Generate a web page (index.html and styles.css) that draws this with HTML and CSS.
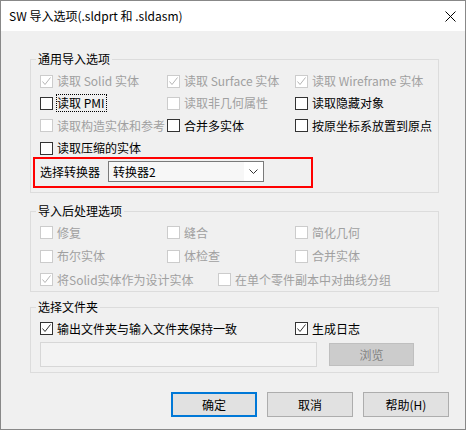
FILE: index.html
```html
<!DOCTYPE html>
<html lang="zh-CN">
<head>
    <meta charset="UTF-8">
    <title>SW 导入选项</title>
    <link rel="stylesheet" href="styles.css">
</head>
<body>
    <div class="dialog">
        <div class="titlebar">
            <span class="title">SW 导入选项(.sldprt 和 .sldasm)</span>
            <svg class="close" width="11" height="11" viewBox="0 0 11 11"><path d="M0.5 0.5L10.5 10.5M10.5 0.5L0.5 10.5"/></svg>
        </div>

        <div class="content">
            <fieldset class="group group-general">
                <legend>通用导入选项</legend>
                <div class="grid grid-general">
                    <div class="check disabled"><span class="box"><svg viewBox="0 0 11 11"><path d="M1.5 5.5L4 8.5L9.5 1.5"/></svg></span><span>读取 Solid 实体</span></div>
                    <div class="check disabled"><span class="box"><svg viewBox="0 0 11 11"><path d="M1.5 5.5L4 8.5L9.5 1.5"/></svg></span><span>读取 Surface 实体</span></div>
                    <div class="check disabled"><span class="box"><svg viewBox="0 0 11 11"><path d="M1.5 5.5L4 8.5L9.5 1.5"/></svg></span><span>读取 Wireframe 实体</span></div>

                    <div class="check"><span class="box"></span><span class="focus">读取 PMI</span></div>
                    <div class="check disabled"><span class="box"></span><span>读取非几何属性</span></div>
                    <div class="check"><span class="box"></span><span>读取隐藏对象</span></div>

                    <div class="check disabled"><span class="box"></span><span>读取构造实体和参考</span></div>
                    <div class="check"><span class="box"></span><span>合并多实体</span></div>
                    <div class="check"><span class="box"></span><span>按原坐标系放置到原点</span></div>

                    <div class="check"><span class="box"></span><span>读取压缩的实体</span></div>
                </div>
                <div class="converter">
                    <span class="converter-label">选择转换器</span>
                    <div class="combo">
                        <span class="combo-value">转换器2</span>
                        <span class="combo-arrow"><svg width="9" height="5" viewBox="0 0 9 5"><path d="M0.5 0.5L4.5 4.5L8.5 0.5"/></svg></span>
                    </div>
                </div>
            </fieldset>

            <fieldset class="group group-post">
                <legend>导入后处理选项</legend>
                <div class="grid grid-post">
                    <div class="check disabled"><span class="box"></span><span>修复</span></div>
                    <div class="check disabled"><span class="box"></span><span>缝合</span></div>
                    <div class="check disabled"><span class="box"></span><span>简化几何</span></div>

                    <div class="check disabled"><span class="box"></span><span>布尔实体</span></div>
                    <div class="check disabled"><span class="box"></span><span>体检查</span></div>
                    <div class="check disabled"><span class="box"></span><span>合并实体</span></div>
                </div>
                <div class="row-post">
                    <div class="check disabled"><span class="box"><svg viewBox="0 0 11 11"><path d="M1.5 5.5L4 8.5L9.5 1.5"/></svg></span><span>将Solid实体作为设计实体</span></div>
                    <div class="check disabled"><span class="box"></span><span>在单个零件副本中对曲线分组</span></div>
                </div>
            </fieldset>

            <fieldset class="group group-folder">
                <legend>选择文件夹</legend>
                <div class="row-folder">
                    <div class="check"><span class="box"><svg viewBox="0 0 11 11"><path d="M1.5 5.5L4 8.5L9.5 1.5"/></svg></span><span>输出文件夹与输入文件夹保持一致</span></div>
                    <div class="check"><span class="box"><svg viewBox="0 0 11 11"><path d="M1.5 5.5L4 8.5L9.5 1.5"/></svg></span><span>生成日志</span></div>
                </div>
                <div class="path-row">
                    <div class="path-input"></div>
                    <button class="btn btn-browse" disabled>浏览</button>
                </div>
            </fieldset>

            <div class="actions">
                <button class="btn btn-default">确定</button>
                <button class="btn">取消</button>
                <button class="btn">帮助(H)</button>
            </div>
        </div>
    </div>
</body>
</html>
```

FILE: styles.css
```css
body {
    margin: 0;
    font-family: "Microsoft YaHei", "Noto Sans CJK SC", sans-serif;
    font-size: 12px;
    line-height: 16px;
    color: #000;
    background: #f0f0f0;
}

.dialog {
    width: 466px;
    height: 430px;
    box-sizing: border-box;
    border: 1px solid #888;
    background: #f0f0f0;
    display: flex;
    flex-direction: column;
}

.titlebar {
    height: 30px;
    background: #fff;
    display: flex;
    align-items: center;
    justify-content: space-between;
    padding: 0 9px 0 8px;
}

.title {
    font-size: 12px;
}

.close {
    stroke: #000;
    stroke-width: 1;
    fill: none;
}

.content {
    padding: 20px 16px 0 29px;
}

.group {
    width: 409px;
    box-sizing: border-box;
    margin: 0;
    border: 1px solid #dcdcdc;
    padding: 0 0 0 9px;
    min-width: 0;
}

.group legend {
    padding: 0 2px;
    margin-left: -4px;
    line-height: 16px;
}

.grid {
    display: grid;
    grid-template-columns: 127px 128px 1fr;
}

.grid-general {
    margin-top: 3px;
    grid-template-rows: 22px 22px 23px 22px;
}

.check {
    display: flex;
    align-items: center;
    white-space: nowrap;
}

.box {
    width: 13px;
    height: 13px;
    box-sizing: border-box;
    border: 1px solid #333;
    background: #fff;
    margin-right: 4px;
    flex: none;
    display: flex;
    align-items: center;
    justify-content: center;
}

.box svg {
    width: 11px;
    height: 11px;
    fill: none;
    stroke: #333;
    stroke-width: 1;
}

.check.disabled {
    color: #a0a0a0;
}

.check.disabled .box {
    border-color: #cccccc;
}

.check.disabled .box svg {
    stroke: #b5b5b5;
}

.focus {
    border: 1px dotted #000;
    margin-left: -1px;
    padding-right: 1px;
}

.converter {
    width: 280px;
    height: 31px;
    box-sizing: border-box;
    margin: -2px 0 4px -7px;
    border: 2px solid #f00;
    padding: 2px 0 4px 5px;
    display: flex;
    align-items: center;
}

.converter-label {
    width: 68px;
}

.combo {
    width: 156px;
    height: 21px;
    box-sizing: border-box;
    border: 1px solid #7a7a7a;
    background: #fff;
    display: flex;
    align-items: center;
}

.combo-value {
    flex: 1;
    padding-left: 4px;
    align-self: stretch;
    display: flex;
    align-items: center;
    background: #f7f7f7;
}

.combo-arrow {
    width: 19px;
    display: flex;
    justify-content: center;
}

.combo-arrow svg {
    fill: none;
    stroke: #333;
    stroke-width: 1;
}

.group-post {
    margin-top: 10px;
}

.grid-post {
    margin-top: 2px;
    grid-template-rows: 23px 24px;
}

.row-post {
    display: grid;
    grid-template-columns: 178px 1fr;
    height: 23px;
}

.group-folder {
    margin-top: 7px;
    padding-bottom: 5px;
}

.row-folder {
    display: grid;
    grid-template-columns: 255px 1fr;
    height: 23px;
    margin-top: 2px;
}

.path-row {
    display: flex;
    align-items: center;
    margin-top: 2px;
}

.path-input {
    width: 277px;
    height: 25px;
    box-sizing: border-box;
    border: 1px solid #d7d7d7;
    background: #f3f3f3;
}

.btn {
    font-family: inherit;
    font-size: 12px;
    width: 86px;
    height: 25px;
    box-sizing: border-box;
    border: 1px solid #adadad;
    background: #e1e1e1;
    color: #000;
    padding: 0;
}

.btn-browse {
    width: 85px;
    height: 23px;
    margin-left: 12px;
    background: #cccccc;
    border-color: #bfbfbf;
    color: #838383;
}

.btn-default {
    border: 2px solid #0078d7;
}

.actions {
    display: flex;
    justify-content: flex-end;
    gap: 10px;
    margin-top: 19px;
}
```
